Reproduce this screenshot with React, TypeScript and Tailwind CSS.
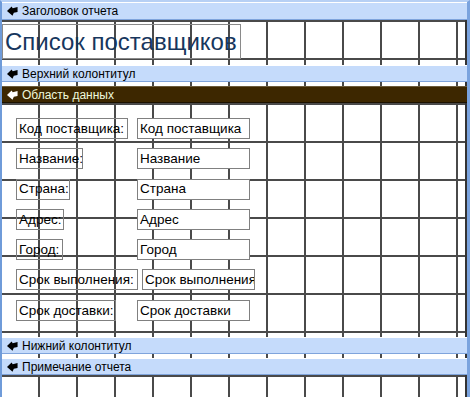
const gridBoth =
  "bg-[linear-gradient(to_right,transparent_36px,#4a4a4a_36px),linear-gradient(to_bottom,#4a4a4a_2px,transparent_2px)] bg-[size:38px_38px]";
const gridCols =
  "bg-[linear-gradient(to_right,transparent_36px,#4a4a4a_36px)] bg-[size:38px_38px]";

function SectionIcon({ color }: { color: string }) {
  return (
    <svg width="11" height="10" viewBox="0 0 10 9" className="shrink-0">
      <path d="M0 4.6 L4.2 0.4 L5.2 2 L9.6 0.8 L9.6 5.4 L6.2 6.2 L5 8.8 Z" fill={color} />
    </svg>
  );
}

function Bar({ title, dark = false, tall = false }: { title: string; dark?: boolean; tall?: boolean }) {
  return (
    <div
      className={`flex items-center gap-[4px] pl-[5px] text-[12px] leading-none border-t border-b ${
        tall ? "h-[18px]" : "h-[17px]"
      } ${
        dark
          ? "bg-[#3d2700] border-t-[#6b5a3a] border-b-[#1c1200] text-[#eef8dc]"
          : "bg-[#c5dbfb] border-t-white border-b-[#7fa4dc] text-black"
      }`}
    >
      <SectionIcon color={dark ? "#ffffff" : "#000000"} />
      <span>{title}</span>
    </div>
  );
}

const rows = [
  { label: "Код поставщика:", lw: "w-[112px]", field: "Код поставщика", shift: false },
  { label: "Название:", lw: "w-[67px]", field: "Название", shift: false },
  { label: "Страна:", lw: "w-[54px]", field: "Страна", shift: false },
  { label: "Адрес:", lw: "w-[48px]", field: "Адрес", shift: false },
  { label: "Город:", lw: "w-[47px]", field: "Город", shift: false },
  { label: "Срок выполнения:", lw: "w-[122px]", field: "Срок выполнения", shift: true },
  { label: "Срок доставки:", lw: "w-[100px]", field: "Срок доставки", shift: false },
];

export default function App() {
  return (
    <div
      className="w-[470px] h-[397px] overflow-hidden bg-white border-l-2 border-r-[3px] border-t-2 border-l-[#6f9bd9] border-r-[#7aa3de] border-t-[#b7d0f4] text-black"
      style={{ fontFamily: '"Liberation Sans", Arial, sans-serif' }}
    >
      <Bar title="Заголовок отчета" tall />
      <div className={`h-[45px] border-r-2 border-[#333] pt-[4px] ${gridBoth}`}>
        <div className="w-[239px] h-[35px] border border-[#8a8a8a] flex items-center pl-[2px] text-[24px] text-[#17365d] leading-none">
          Список поставщиков
        </div>
      </div>

      <Bar title="Верхний колонтитул" />
      <div className={`h-[4px] border-r-2 border-[#333] ${gridCols}`} />

      <Bar title="Область данных" dark />
      <div className={`h-[234px] border-r-2 border-[#333] pt-[15px] pl-[14px] ${gridBoth}`}>
        <div className="flex flex-col gap-[9.3px] text-[13.5px] leading-none">
          {rows.map((r) => (
            <div key={r.label} className="grid grid-cols-[121px_auto] h-[21px]">
              <div className={`${r.lw} h-[21px] border border-[#808080] flex items-center pl-[2px] whitespace-nowrap`}>
                {r.label}
              </div>
              <div
                className={`w-[113px] h-[21px] border border-[#808080] bg-white flex items-center pl-[2px] whitespace-nowrap overflow-hidden ${
                  r.shift ? "ml-[5px]" : ""
                }`}
              >
                {r.field}
              </div>
            </div>
          ))}
        </div>
      </div>

      <Bar title="Нижний колонтитул" />
      <div className={`h-[4px] border-r-2 border-[#333] ${gridCols}`} />

      <Bar title="Примечание отчета" />
      <div className={`h-[40px] border-r-2 border-[#333] ${gridBoth}`} />
    </div>
  );
}
